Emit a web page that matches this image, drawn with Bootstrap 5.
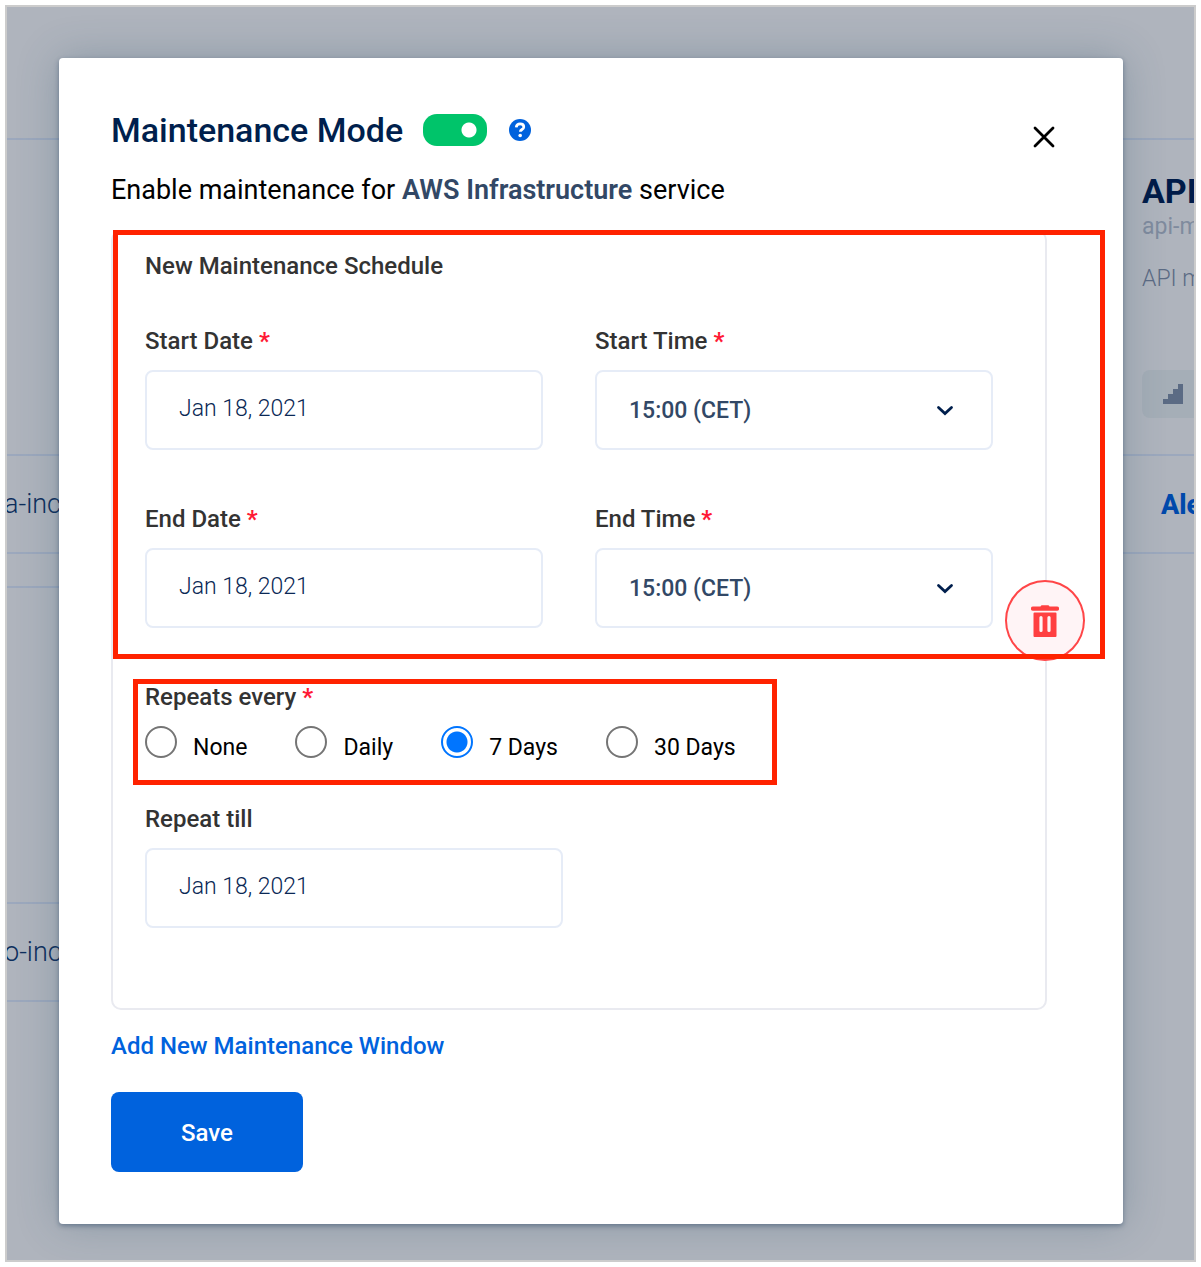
<!DOCTYPE html>
<html lang="en">
<head>
<meta charset="utf-8">
<meta name="viewport" content="width=device-width, initial-scale=1">
<title>Maintenance Mode</title>
<link rel="stylesheet" href="https://cdn.jsdelivr.net/npm/bootstrap@5.3.0/dist/css/bootstrap.min.css">
<style>
  body { font-family: Roboto, "Liberation Sans", sans-serif; font-size: 23px; line-height: 32px; color: #000; background: #fff; padding: 5px; }
  .shell { border: 2px solid #ccc; background: #afb4bd; overflow: hidden; }
  .side-left { flex: 0 0 52px; width: 52px; color: #0d2e5c; font-size: 27px; font-weight: 300; text-indent: -3px; }
  .side-right { flex: 0 0 71px; width: 71px; color: #5b6b84; }
  .strip { border-bottom: 2px solid #9ca8bd; white-space: nowrap; }
  .strip-top { height: 133px; }
  .strip-tall { height: 316px; }
  .strip-text { height: 98px; }
  .strip-slim { height: 34px; }
  .service { padding: 31px 0 0 19px; }
  .service-name { font-size: 34px; line-height: 40px; font-weight: 700; color: #001b48; margin: 0; }
  .service-slug { color: #7f8b9e; margin-bottom: 20px; }
  .service-note { font-weight: 300; margin-bottom: 75px; }
  .chip { width: 96px; height: 48px; border-radius: 8px; background: #a5aeb7; padding-left: 20px; }
  .alerts { color: #0049ab; font-size: 27px; font-weight: 800; padding: 2px 0 0 38px; text-decoration: none; }
  .dialog-box { position: relative; z-index: 1; margin: 51px 0 36px; padding: 52px; background: #fff; border-radius: 4px; box-shadow: 0 2px 5px rgba(20,50,85,.4), 0 0 42px rgba(50,85,110,.3); }
  .title { font-size: 34px; line-height: 40px; font-weight: 500; color: #001f4d; margin: 0 20px 0 0; }
  .toggle.form-check-input { width: 64px; height: 32px; margin: 0 22px 0 0; border: 0; border-radius: 14px; background: #00c46a radial-gradient(circle at 46px 16px, #fff 7px, transparent 8px); }
  .toggle.form-check-input:checked { background-color: #00c46a; }
  .plain { border: 0; background: none; padding: 0; }
  .close-x { width: 54px; height: 54px; }
  .intro { font-size: 27px; line-height: 40px; margin: 20px 0; }
  .intro strong { font-weight: 600; color: #324866; }
  .schedule { position: relative; margin: 0 24px 20px 0; padding: 18px 52px 80px 32px; border: 2px solid #e9eaf0; border-radius: 10px; }
  .schedule h2 { font-size: 24px; line-height: 32px; font-weight: 500; color: #333; margin: 0 0 43px; }
  .field-grid { display: grid; grid-template-columns: 1fr 1fr; gap: 53px 52px; margin-bottom: 53px; }
  .caption { display: block; font-weight: 500; color: #333; margin: 0 0 13px; padding: 0; font-size: 24px; line-height: 32px; float: none; }
  .caption span { color: #ff1a35; font-weight: 700; }
  .box.form-control, .box.form-select { height: 80px; border: 2px solid #e6ecf7; border-radius: 8px; font-size: 23px; line-height: 32px; background-color: #fff; }
  .box.form-control { padding: 20px 32px 24px; font-weight: 300; color: #0a2855; }
  .box.form-select { padding: 23px 32px 21px; font-weight: 500; color: #324866; background-image: none; }
  .pick svg { position: absolute; right: 38px; top: 32px; pointer-events: none; }
  .till { width: 418px; max-width: 100%; }
  .choices { gap: 48px; margin-bottom: 35px; }
  .choices label { line-height: 40px; padding-top: 2px; }
  .ring.form-check-input { width: 32px; height: 32px; margin: 0 16px 0 0; border: 2px solid #757575; background-color: #fff; flex: none; }
  .ring.form-check-input:checked { border-color: #0075ff; background: radial-gradient(circle, #0075ff 10px, transparent 11px); }
  .bin { position: absolute; right: -40px; top: 348px; width: 80px; height: 81px; border: 2px solid #ff4648; border-radius: 50%; background: #fff4f6; }
  .outline { position: absolute; border: 5px solid #ff2200; pointer-events: none; }
  .outline-dates { left: 0; top: -2px; right: -60px; height: 429px; }
  .outline-repeat { left: -12px; top: -47px; width: 644px; height: 106px; }
  .add-link { font-size: 24px; font-weight: 500; color: #0062dd; text-decoration: none; }
  .save.btn { width: 192px; height: 80px; margin-top: 30px; padding: 8px 0 6px; border-radius: 8px; font-size: 24px; font-weight: 500; background: #0062dd; border: 0; }
</style>
<script src="https://cdn.jsdelivr.net/npm/bootstrap@5.3.0/dist/js/bootstrap.bundle.min.js"></script>
</head>
<body>
<div class="shell d-flex">
  <aside class="side-left">
    <div class="strip strip-top"></div>
    <div class="strip strip-tall"></div>
    <div class="strip strip-text d-flex align-items-center overflow-hidden">a-inc</div>
    <div class="strip strip-slim"></div>
    <div class="strip strip-tall"></div>
    <div class="strip strip-text d-flex align-items-center overflow-hidden">o-inc</div>
  </aside>

  <main class="dialog-box flex-grow-1" role="dialog" aria-labelledby="dialogTitle">
    <header class="d-flex justify-content-between align-items-start">
      <div>
        <div class="d-flex align-items-center">
          <h1 class="title" id="dialogTitle">Maintenance Mode</h1>
          <input class="toggle form-check-input" type="checkbox" role="switch" aria-label="Maintenance Mode" checked>
          <button class="plain d-flex" type="button" aria-label="Help">
            <svg width="22" height="22" viewBox="0 0 22 22"><circle cx="11" cy="11" r="11" fill="#0062dd"/><path d="M7.200 8.300C7.500 6 9 4.900 11.100 4.900c2.200 0 3.700 1.200 3.700 3 0 2.800-3.500 2.400-3.500 4.900" fill="none" stroke="#fff" stroke-width="2.700"/><circle cx="11.200" cy="16.500" r="1.800" fill="#fff"/></svg>
          </button>
        </div>
        <p class="intro">Enable maintenance for <strong>AWS Infrastructure</strong> service</p>
      </div>
      <button class="plain close-x d-flex align-items-center justify-content-center" type="button" aria-label="Close">
        <svg width="22" height="22" viewBox="0 0 22 22"><path d="M2 2l18 18M20 2L2 20" stroke="#000" stroke-width="2.8" stroke-linecap="round"/></svg>
      </button>
    </header>

    <form>
      <section class="schedule">
        <h2>New Maintenance Schedule</h2>
        <div class="field-grid">
          <div>
            <label class="caption" for="startDate">Start Date <span>*</span></label>
            <input class="box form-control" id="startDate" type="text" value="Jan 18, 2021">
          </div>
          <div>
            <label class="caption" for="startTime">Start Time <span>*</span></label>
            <div class="pick position-relative">
              <select class="box form-select" id="startTime"><option>15:00 (CET)</option></select>
              <svg width="20" height="16" viewBox="0 0 20 16"><path d="M3.500 5.500L10 11.500l6.500-6" fill="none" stroke="#001f4d" stroke-width="2.8" stroke-linecap="round"/></svg>
            </div>
          </div>
          <div>
            <label class="caption" for="endDate">End Date <span>*</span></label>
            <input class="box form-control" id="endDate" type="text" value="Jan 18, 2021">
          </div>
          <div>
            <label class="caption" for="endTime">End Time <span>*</span></label>
            <div class="pick position-relative">
              <select class="box form-select" id="endTime"><option>15:00 (CET)</option></select>
              <svg width="20" height="16" viewBox="0 0 20 16"><path d="M3.500 5.500L10 11.500l6.500-6" fill="none" stroke="#001f4d" stroke-width="2.8" stroke-linecap="round"/></svg>
            </div>
          </div>
        </div>

        <fieldset class="position-relative">
          <legend class="caption">Repeats every <span>*</span></legend>
          <div class="choices d-flex">
            <div class="d-flex"><input class="ring form-check-input" type="radio" name="repeat" id="rNone"><label for="rNone">None</label></div>
            <div class="d-flex"><input class="ring form-check-input" type="radio" name="repeat" id="rDaily"><label for="rDaily">Daily</label></div>
            <div class="d-flex"><input class="ring form-check-input" type="radio" name="repeat" id="rWeek" checked><label for="rWeek">7 Days</label></div>
            <div class="d-flex"><input class="ring form-check-input" type="radio" name="repeat" id="rMonth"><label for="rMonth">30 Days</label></div>
          </div>
          <div class="outline outline-repeat"></div>
        </fieldset>

        <label class="caption" for="till">Repeat till</label>
        <input class="box form-control till" id="till" type="text" value="Jan 18, 2021">

        <button class="bin d-flex align-items-center justify-content-center p-0" type="button" aria-label="Delete schedule">
          <svg width="28" height="32" viewBox="0 0 28 32"><path d="M2 1.500H9.500Q10 .3 11 .3h6q1 0 1.500 1.200H26a2 2 0 0 1 0 4.200H2a2 2 0 0 1 0-4.200z" fill="#ff4041"/><path fill-rule="evenodd" d="M3.500 7.500h21q1 0 1 1v22.500q0 1-1 1h-21q-1 0-1-1V8.500q0-1 1-1zM10 11q-1.600 0-1.600 1.500v13q0 1.500 1.600 1.500t1.600-1.500v-13Q11.600 11 10 11zm8 0q-1.600 0-1.600 1.500v13q0 1.500 1.600 1.500t1.600-1.500v-13Q19.600 11 18 11z" fill="#ff4041"/></svg>
        </button>
        <div class="outline outline-dates"></div>
      </section>

      <a class="add-link d-block" href="#">Add New Maintenance Window</a>
      <button class="save btn btn-primary d-block" type="submit">Save</button>
    </form>
  </main>

  <aside class="side-right overflow-hidden">
    <div class="strip strip-top"></div>
    <div class="strip strip-tall service">
      <h2 class="service-name">API</h2>
      <div class="service-slug">api-m</div>
      <div class="service-note">API m</div>
      <div class="chip d-flex align-items-center">
        <svg width="22" height="20" viewBox="0 0 22 20"><path d="M1 20v-5h5v-5h5V5h5V0h5v20z" fill="#5b6b84"/></svg>
      </div>
    </div>
    <div class="strip strip-text d-flex align-items-center"><a class="alerts" href="#">Ale</a></div>
  </aside>
</div>
</body>
</html>
